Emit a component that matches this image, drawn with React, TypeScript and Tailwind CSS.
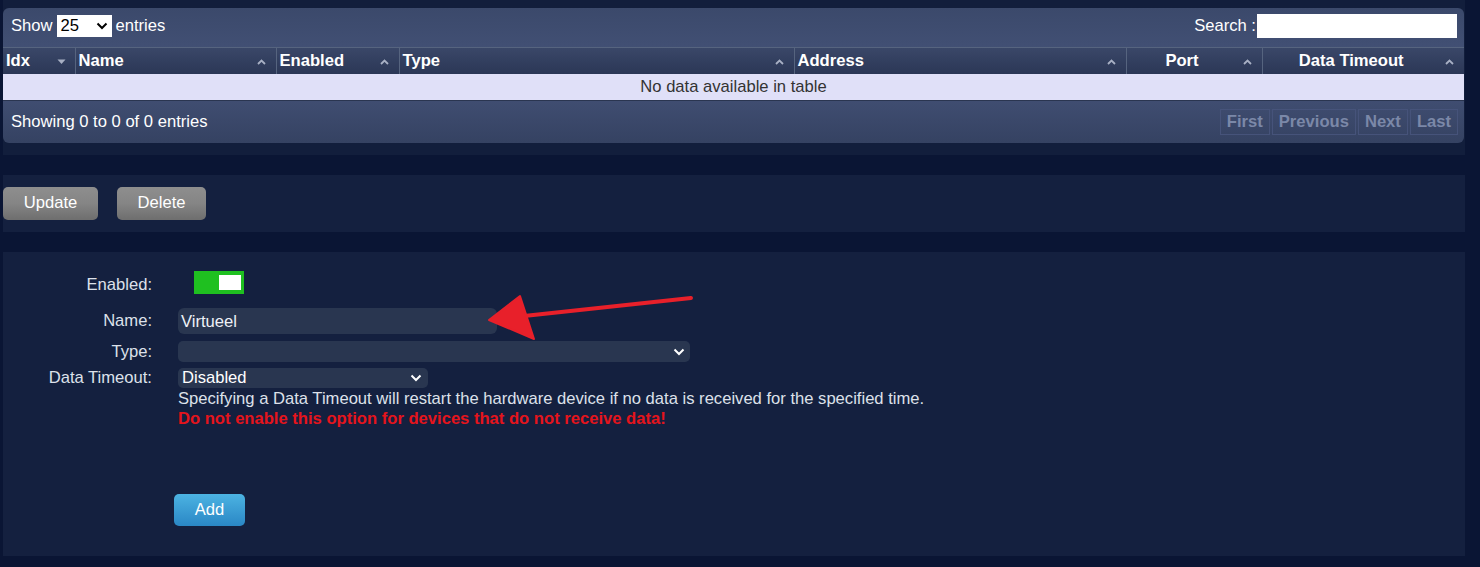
import React from "react";

const font = { fontFamily: '"Liberation Sans", Arial, sans-serif' };

const columns = [
  { label: "Idx", width: 72, align: "left", icon: "down" },
  { label: "Name", width: 201, align: "left", icon: "up" },
  { label: "Enabled", width: 123, align: "left", icon: "up" },
  { label: "Type", width: 395, align: "left", icon: "up" },
  { label: "Address", width: 332, align: "left", icon: "up" },
  { label: "Port", width: 136, align: "center", icon: "up" },
  { label: "Data Timeout", width: 202, align: "center", icon: "up" },
];

const SortIcon: React.FC<{ dir: string }> = ({ dir }) =>
  dir === "down" ? (
    <svg width="9" height="6" viewBox="0 0 9 6" className="absolute right-[9px] top-[11px]">
      <path d="M0.5 0.5h8L4.5 5z" fill="#a8b0c4" />
    </svg>
  ) : (
    <svg width="9" height="6" viewBox="0 0 9 6" className="absolute right-[10px] top-[11px]">
      <path d="M1 5l3.5-3.5L8 5" stroke="#a8b0c4" strokeWidth="1.8" fill="none" />
    </svg>
  );

const Chevron: React.FC<{ color?: string }> = ({ color = "#ffffff" }) => (
  <svg width="12" height="8" viewBox="0 0 12 8">
    <path d="M1.5 1.5L6 6l4.5-4.5" stroke={color} strokeWidth="2" fill="none" />
  </svg>
);

const DataTable: React.FC = () => (
  <div className="rounded-[6px] overflow-hidden bg-gradient-to-b from-[#3b496b] via-[#46547a] to-[#354262] w-[1461px]">
    {/* toolbar */}
    <div className="h-[39px] flex items-center justify-between pl-[8px] pr-[7px] pb-[3px] text-white text-[16.6px]">
      <div className="flex items-center gap-[4px]">
        <span>Show</span>
        <div className="bg-white text-black h-[22px] w-[55px] flex items-center justify-between px-[4px]">
          <span>25</span>
          <Chevron color="#000000" />
        </div>
        <span>entries</span>
      </div>
      <div className="flex items-center">
        <span>Search :</span>
        <div className="bg-white h-[24px] w-[200px] ml-[1px]" />
      </div>
    </div>
    {/* table */}
    <table className="border-collapse table-fixed w-[1461px]">
      <colgroup>
        {columns.map((c) => (
          <col key={c.label} style={{ width: c.width }} />
        ))}
      </colgroup>
      <thead>
        <tr className="h-[26px] bg-gradient-to-b from-[#3a4768] to-[#2b3756]">
          {columns.map((c, i) => (
            <th
              key={c.label}
              className={
                "relative font-bold text-white text-[16.6px] pt-px border-t border-[#56647f] " +
                (i > 0 ? "border-l border-l-[#56647f] " : "") +
                (c.align === "center" ? "text-center pr-[24px]" : "text-left pl-[3px]")
              }
            >
              {c.label}
              <SortIcon dir={c.icon} />
            </th>
          ))}
        </tr>
      </thead>
      <tbody>
        <tr className="h-[27px] bg-[#e0e0f8]">
          <td colSpan={7} className="text-center text-[#333333] text-[16.6px] pt-px border-b border-[#2a3550]">
            No data available in table
          </td>
        </tr>
      </tbody>
    </table>
    {/* footer */}
    <div className="h-[42px] flex items-center justify-between pl-[8px] pr-[6px] text-white text-[16.6px]">
      <span>Showing 0 to 0 of 0 entries</span>
      <div className="flex gap-[2px] font-bold text-[#7b88a8]">
        {["First", "Previous", "Next", "Last"].map((b) => (
          <span key={b} className="h-[26px] px-[6px] flex items-center border border-[#46537a]">
            {b}
          </span>
        ))}
      </div>
    </div>
  </div>
);

const GrayButton: React.FC<{ label: string; w: string }> = ({ label, w }) => (
  <button
    className={
      "h-[33px] rounded-[5px] text-white text-[16.6px] bg-gradient-to-b from-[#8e8e8e] via-[#858585] to-[#6e6e6e] " + w
    }
  >
    {label}
  </button>
);

export default function App() {
  return (
    <div className="relative w-[1480px] h-[567px] bg-[#0a1534] overflow-hidden" style={font}>
      <div className="ml-[3px] w-[1462px] flex flex-col">
        <div className="bg-[#121e3c] pt-[8px] pb-[12px]">
          <DataTable />
        </div>

        <div className="mt-[20px] bg-[#14203f] h-[57px] flex items-center gap-[19px]">
          <GrayButton label="Update" w="w-[95px]" />
          <GrayButton label="Delete" w="w-[89px]" />
        </div>

        <div className="mt-[20px] bg-[#14203f] h-[304px] pt-[19px] text-[16.6px] leading-[20px] text-[#dde1ea]">
          <div className="flex items-center h-[23px]">
            <span className="w-[149px] text-right pt-[4px]">Enabled:</span>
            <div className="ml-[42px] w-[50px] h-[23px] bg-[#1fc020] flex items-center justify-end pr-[3px]">
              <div className="w-[22px] h-[15px] bg-white" />
            </div>
          </div>
          <div className="flex items-center mt-[14px]">
            <span className="w-[149px] text-right">Name:</span>
            <div className="ml-[26px] w-[319px] h-[26px] rounded-[6px] bg-[#293650] flex items-center px-[3px] pt-px text-[#eef1f6]">
              Virtueel
            </div>
          </div>
          <div className="flex items-center mt-[7px]">
            <span className="w-[149px] text-right">Type:</span>
            <div className="ml-[26px] w-[512px] h-[21px] rounded-[5px] bg-[#293650] flex items-center justify-end pr-[5px]">
              <Chevron />
            </div>
          </div>
          <div className="flex items-start mt-[6px]">
            <span className="w-[149px] text-right">Data Timeout:</span>
            <div className="ml-[26px] flex flex-col">
              <div className="w-[250px] h-[20px] rounded-[5px] bg-[#293650] flex items-center justify-between pl-[4px] pr-[6px] text-white">
                <span>Disabled</span>
                <Chevron />
              </div>
              <span className="pt-px">
                Specifying a Data Timeout will restart the hardware device if no data is received for the specified time.
              </span>
              <span className="font-bold text-[#e5141c]">
                Do not enable this option for devices that do not receive data!
              </span>
            </div>
          </div>
          <button className="ml-[171px] mt-[65px] w-[71px] h-[32px] rounded-[5px] text-white text-[16.6px] bg-gradient-to-b from-[#4cb3e2] to-[#2a87c5]">
            Add
          </button>
        </div>
      </div>

      {/* red annotation arrow */}
      <svg className="absolute left-0 top-0 pointer-events-none" width="1480" height="567" viewBox="0 0 1480 567">
        <line x1="691" y1="298" x2="524" y2="316" stroke="#e8202a" strokeWidth="4" strokeLinecap="round" />
        <path d="M489 320L520 296L534 339Z" fill="#e8202a" stroke="#e8202a" strokeWidth="2" strokeLinejoin="round" />
      </svg>
    </div>
  );
}
